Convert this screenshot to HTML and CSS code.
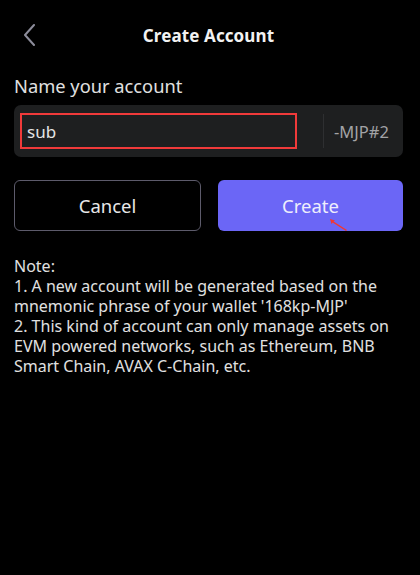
FILE: index.html
```html
<!DOCTYPE html>
<html>
<head>
<meta charset="utf-8">
<link rel="stylesheet" href="styles.css">
</head>
<body>
<div class="page">
  <header class="header">
    <span class="back">
      <svg width="14" height="22" viewBox="0 0 14 22"><path d="M11 1 L2 11 L11 21" fill="none" stroke="#8c8c9a" stroke-width="2" stroke-linecap="round" stroke-linejoin="round"/></svg>
    </span>
    <h1 class="title">Create Account</h1>
  </header>
  <div class="label">Name your account</div>
  <div class="field">
    <div class="input-wrap"><span class="input-text">sub</span></div>
    <div class="sep"></div>
    <div class="suffix">-MJP#2</div>
  </div>
  <div class="buttons">
    <button class="btn btn-cancel">Cancel</button>
    <button class="btn btn-create">Create
      <svg class="cursor" width="20" height="14" viewBox="0 0 20 14"><path d="M1 1 L6 2.5 L4.6 3.6 L18 12 L17 13 L3.6 4.6 L2.6 6.2 Z" fill="#f2372f"/></svg>
    </button>
  </div>
  <div class="note">
    <p>Note:</p>
    <p>1. A new account will be generated based on the mnemonic phrase of your wallet '168kp-MJP'</p>
    <p>2. This kind of account can only manage assets on EVM powered networks, such as Ethereum, BNB Smart Chain, AVAX C-Chain, etc.</p>
  </div>
</div>
</body>
</html>
```

FILE: styles.css
```css
* { box-sizing: border-box; }
html, body { margin: 0; padding: 0; background: #000; }
body {
  width: 420px;
  height: 575px;
  font-family: "Noto Sans", "Open Sans", sans-serif;
  color: #e6e6e6;
}
.page { padding: 0 17px 0 14px; }
.header {
  position: relative;
  height: 70px;
  display: flex;
  align-items: center;
  justify-content: center;
}
.back {
  position: absolute;
  left: 9px;
  top: 24px;
  display: flex;
}
.title {
  margin: 0;
  font-size: 17px;
  font-weight: 700;
  color: #f2f2f2;
  letter-spacing: 0.1px;
}
.label {
  font-size: 18.3px;
  line-height: 24px;
  margin-top: 4px;
  color: #e0e0e0;
}
.field {
  margin-top: 7px;
  height: 52px;
  background: #1e1f20;
  border-radius: 7px;
  display: flex;
  align-items: center;
}
.input-wrap {
  margin-left: 6px;
  width: 277px;
  height: 36px;
  border: 2px solid #f03a3a;
  display: flex;
  align-items: center;
  padding-left: 5px;
  padding-top: 1px;
}
.input-text { font-size: 17px; color: #e4e4e4; }
.sep {
  margin-left: 26px;
  width: 1px;
  height: 34px;
  background: #2e2f31;
}
.suffix {
  margin-left: 10px;
  font-size: 16.5px;
  color: #a3a3a6;
}
.buttons {
  margin-top: 23px;
  display: flex;
  gap: 17px;
}
.btn {
  flex: 1;
  height: 51px;
  border-radius: 6px;
  font-family: inherit;
  font-size: 18.5px;
  padding: 0;
}
.btn-cancel {
  background: #000;
  border: 1.5px solid #5d5b6b;
  color: #e8e8e8;
}
.btn-create {
  position: relative;
  background: #6b66f6;
  border: none;
  color: #eeeefc;
}
.cursor {
  position: absolute;
  left: 111px;
  top: 38px;
}
.note {
  margin-top: 25px;
  font-size: 16px;
  line-height: 20px;
  color: #e0e0e0;
}
.note p { margin: 0; }
```
